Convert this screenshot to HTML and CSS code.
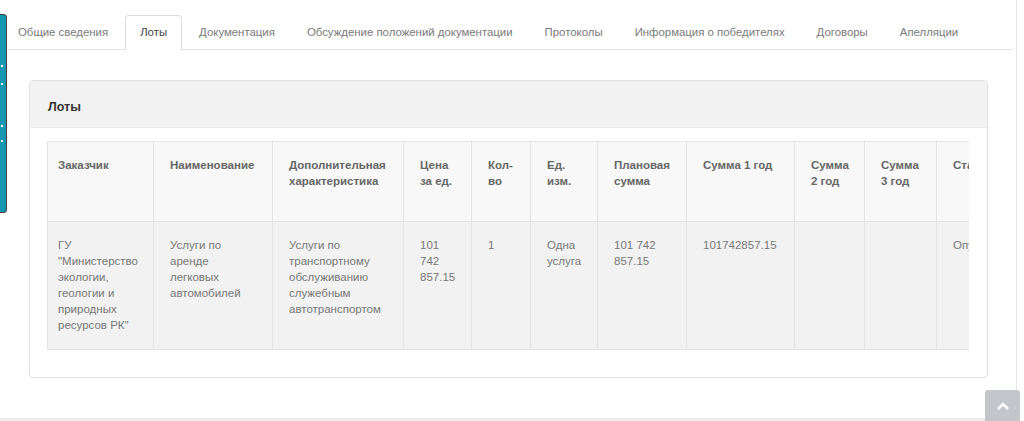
FILE: index.html
```html
<!DOCTYPE html>
<html lang="ru">
<head>
<meta charset="UTF-8">
<title>Лоты</title>
<link rel="stylesheet" href="styles.css">
</head>
<body>
  <div class="side-widget"><span></span><span></span><span></span><span></span></div>
  <div class="page">
    <ul class="nav-tabs">
      <li><a href="#">Общие сведения</a></li>
      <li class="active"><a href="#">Лоты</a></li>
      <li><a href="#">Документация</a></li>
      <li><a href="#">Обсуждение положений документации</a></li>
      <li><a href="#">Протоколы</a></li>
      <li><a href="#">Информация о победителях</a></li>
      <li><a href="#">Договоры</a></li>
      <li><a href="#">Апелляции</a></li>
    </ul>
    <div class="panel">
      <div class="panel-heading">Лоты</div>
      <div class="panel-body">
        <div class="table-wrap">
          <table class="lots">
            <colgroup>
              <col style="width:106px"><col style="width:119px"><col style="width:131px">
              <col style="width:68px"><col style="width:59px"><col style="width:67px">
              <col style="width:89px"><col style="width:108px"><col style="width:70px">
              <col style="width:72px"><col style="width:110px">
            </colgroup>
            <thead>
              <tr>
                <th>Заказчик</th>
                <th>Наименование</th>
                <th>Дополнительная характеристика</th>
                <th>Цена за ед.</th>
                <th>Кол-во</th>
                <th>Ед. изм.</th>
                <th>Плановая сумма</th>
                <th>Сумма 1 год</th>
                <th>Сумма 2 год</th>
                <th>Сумма 3 год</th>
                <th>Статус</th>
              </tr>
            </thead>
            <tbody>
              <tr>
                <td>ГУ "Министерство экологии, геологии и природных ресурсов РК"</td>
                <td>Услуги по аренде легковых автомобилей</td>
                <td>Услуги по транспортному обслуживанию служебным автотранспортом</td>
                <td>101 742 857.15</td>
                <td>1</td>
                <td>Одна услуга</td>
                <td>101 742 857.15</td>
                <td>101742857.15</td>
                <td></td>
                <td></td>
                <td>Опубликован</td>
              </tr>
            </tbody>
          </table>
        </div>
      </div>
    </div>
  </div>
  <a class="to-top" href="#">
    <svg width="14" height="10" viewBox="0 0 14 10"><path d="M2 8 L7 3 L12 8" fill="none" stroke="#fff" stroke-width="2.6"/></svg>
  </a>
</body>
</html>
```

FILE: styles.css
```css
body {
  margin: 0;
  font-family: 'Liberation Sans', Arial, sans-serif;
  background: #fff;
  color: #666;
}
.page {
  width: 1017px;
  height: 421px;
  padding-top: 15px;
  box-sizing: border-box;
  border-right: 1px solid #e6e6e6;
  border-bottom: 3px solid #eee;
}
.nav-tabs {
  display: flex;
  list-style: none;
  margin: 0 3px 0 3px;
  padding: 0;
  border-bottom: 1px solid #e3e3e3;
  white-space: nowrap;
}
.nav-tabs li {
  margin-right: 2px;
  margin-bottom: -1px;
}
.nav-tabs a {
  display: block;
  padding: 0 14px;
  height: 33px;
  line-height: 33px;
  font-size: 11.4px;
  color: #7a7a7a;
  text-decoration: none;
  border: 1px solid transparent;
  border-bottom: none;
  border-radius: 4px 4px 0 0;
}
.nav-tabs .active a {
  color: #444;
  background: #fff;
  border-color: #ddd;
  height: 34px;
}
.panel {
  margin: 30px 28px 0 29px;
  border: 1px solid #e0e0e0;
  border-radius: 4px;
  background: #fff;
}
.panel-heading {
  height: 47px;
  box-sizing: border-box;
  padding: 18px 18px 0;
  line-height: 16px;
  font-size: 12.5px;
  font-weight: bold;
  color: #333;
  background: #f2f2f2;
  border-bottom: 1px solid #ebebeb;
  border-radius: 3px 3px 0 0;
}
.panel-body {
  padding: 13px 18px 27px 17px;
}
.table-wrap {
  overflow: hidden;
}
.lots {
  table-layout: fixed;
  width: 999px;
  border-collapse: collapse;
  font-size: 11.5px;
  line-height: 16px;
}
.lots th,
.lots td {
  text-align: left;
  vertical-align: top;
  padding: 15px 16px;
  border: 1px solid #e4e4e4;
}
.lots th:first-child,
.lots td:first-child {
  padding-left: 10px;
  padding-right: 12px;
}
.lots th {
  height: 49px;
  background: #f8f8f8;
  color: #666;
  font-weight: bold;
}
.lots td {
  height: 97px;
  background: #f2f2f2;
  color: #777;
}
.side-widget {
  position: absolute;
  left: -6px;
  top: 14px;
  width: 11px;
  height: 197px;
  background: #1496b0;
  border: 1px solid #444;
  border-radius: 3px;
  box-shadow: 1px 0 0 #fff;
}
.side-widget span {
  position: absolute;
  left: 6px;
  width: 2px;
  height: 2px;
  background: #fff;
}
.side-widget span:nth-child(1) { top: 50px; }
.side-widget span:nth-child(2) { top: 68px; }
.side-widget span:nth-child(3) { top: 110px; }
.side-widget span:nth-child(4) { top: 125px; }
.to-top {
  position: absolute;
  left: 985px;
  top: 390px;
  width: 35px;
  height: 31px;
  background: #c3c7cb;
  border-radius: 3px 3px 0 0;
  display: flex;
  justify-content: center;
  padding-top: 11px;
  box-sizing: border-box;
}
.to-top svg {
  display: block;
}
```
